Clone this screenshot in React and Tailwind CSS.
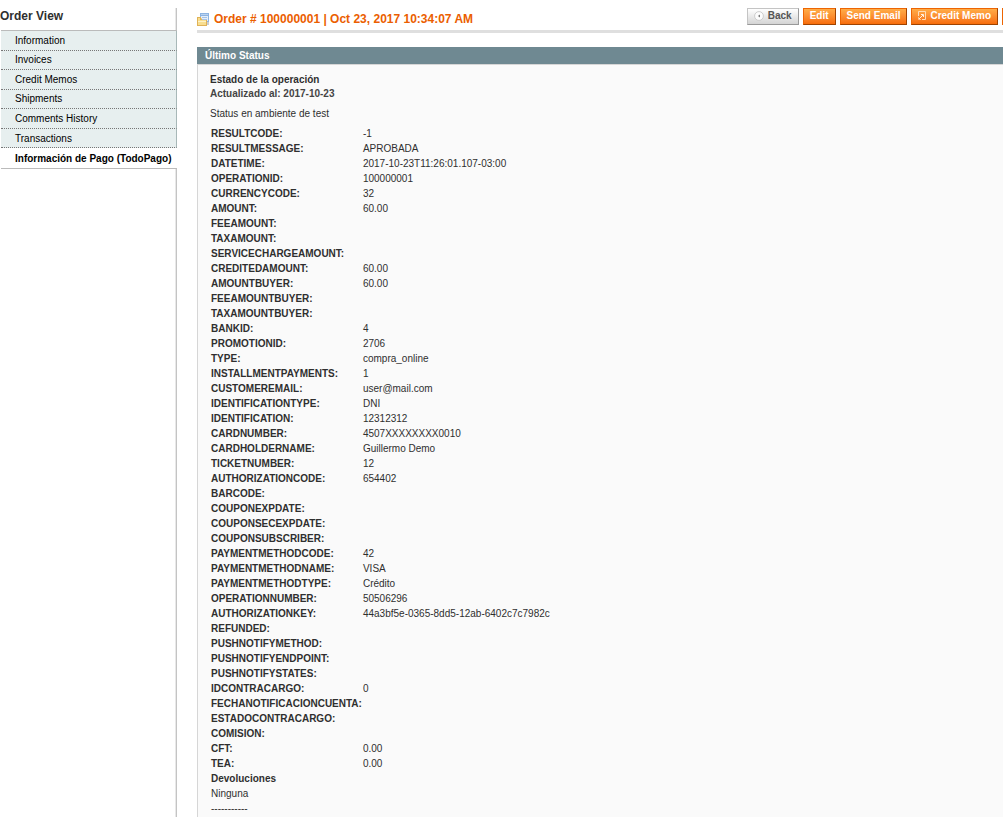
import React from "react";

const tabs = ["Information", "Invoices", "Credit Memos", "Shipments", "Comments History", "Transactions"];

const rows = [
  ["RESULTCODE", "-1"],
  ["RESULTMESSAGE", "APROBADA"],
  ["DATETIME", "2017-10-23T11:26:01.107-03:00"],
  ["OPERATIONID", "100000001"],
  ["CURRENCYCODE", "32"],
  ["AMOUNT", "60.00"],
  ["FEEAMOUNT", ""],
  ["TAXAMOUNT", ""],
  ["SERVICECHARGEAMOUNT", ""],
  ["CREDITEDAMOUNT", "60.00"],
  ["AMOUNTBUYER", "60.00"],
  ["FEEAMOUNTBUYER", ""],
  ["TAXAMOUNTBUYER", ""],
  ["BANKID", "4"],
  ["PROMOTIONID", "2706"],
  ["TYPE", "compra_online"],
  ["INSTALLMENTPAYMENTS", "1"],
  ["CUSTOMEREMAIL", "user@mail.com"],
  ["IDENTIFICATIONTYPE", "DNI"],
  ["IDENTIFICATION", "12312312"],
  ["CARDNUMBER", "4507XXXXXXXX0010"],
  ["CARDHOLDERNAME", "Guillermo Demo"],
  ["TICKETNUMBER", "12"],
  ["AUTHORIZATIONCODE", "654402"],
  ["BARCODE", ""],
  ["COUPONEXPDATE", ""],
  ["COUPONSECEXPDATE", ""],
  ["COUPONSUBSCRIBER", ""],
  ["PAYMENTMETHODCODE", "42"],
  ["PAYMENTMETHODNAME", "VISA"],
  ["PAYMENTMETHODTYPE", "Crédito"],
  ["OPERATIONNUMBER", "50506296"],
  ["AUTHORIZATIONKEY", "44a3bf5e-0365-8dd5-12ab-6402c7c7982c"],
  ["REFUNDED", ""],
  ["PUSHNOTIFYMETHOD", ""],
  ["PUSHNOTIFYENDPOINT", ""],
  ["PUSHNOTIFYSTATES", ""],
  ["IDCONTRACARGO", "0"],
  ["FECHANOTIFICACIONCUENTA", ""],
  ["ESTADOCONTRACARGO", ""],
  ["COMISION", ""],
  ["CFT", "0.00"],
  ["TEA", "0.00"],
];

function OrderIcon() {
  return (
    <svg width="12" height="13" viewBox="0 0 12 13" aria-hidden="true" className="shrink-0">
      <rect x="3" y="0" width="9" height="9" fill="#8db4e2" />
      <rect x="4" y="1" width="7" height="1" fill="#b9d2ef" />
      <rect x="4" y="3" width="7" height="5" fill="#e4eefa" />
      <path d="M5 4.5h5M5 6.5h5" stroke="#a5c3e8" />
      <path d="M10 12V9h2v3z" fill="#c9cdd4" />
      <path d="M0 4h4v1.5h1V7h5v6H0z" fill="#e0b257" />
      <path d="M1 5h2v2h6v5H1z" fill="#f8de90" />
      <path d="M1 8.5h8" stroke="#fdf2c8" />
    </svg>
  );
}

function BackIcon() {
  return (
    <svg width="10" height="10" viewBox="0 0 10 10" aria-hidden="true">
      <circle cx="5" cy="5" r="4.4" fill="#fcfcfc" stroke="#c8c8c8" strokeWidth="0.9" />
      <path d="M6 3.4v3.2L3.9 5z" fill="#777" />
    </svg>
  );
}

function MemoIcon() {
  return (
    <svg width="8" height="9" viewBox="0 0 8 9" aria-hidden="true">
      <path d="M0.5 5V0.5h7v8H4" fill="none" stroke="#ffdcb8" />
      <path d="M3 3.5h2.5V6M5 4L1 8" fill="none" stroke="#fff1e2" />
      <path d="M0.5 6v2.5H3" fill="none" stroke="#ffc18a" />
    </svg>
  );
}

function Button({ children, gray }) {
  return (
    <button
      type="button"
      className={
        "flex h-[17px] shrink-0 items-center gap-1 whitespace-nowrap border px-1.5 pb-0.5 font-bold leading-[13px] " +
        (gray
          ? "border-t-[#c4c4c4] border-l-[#c4c4c4] border-r-[#999] border-b-[#999] bg-linear-to-b from-white to-[#d4d4d4] text-[#555]"
          : "border-t-[#ed6502] border-l-[#ed6502] border-r-[#a04300] border-b-[#a04300] bg-linear-to-b from-[#ffac47] to-[#f76d09] text-white")
      }
    >
      {children}
    </button>
  );
}

export default function App() {
  return (
    <div className="flex min-h-screen gap-5 overflow-hidden bg-white pt-2 font-['Liberation_Sans',Arial,sans-serif] text-[10px] leading-[15px] text-[#2f2f2f]">
      <aside className="w-[177px] shrink-0 border-r border-[#c4c4c4] bg-linear-to-l from-[#e8e8e8] from-[1px] to-white to-[1px]">
        <h3 className="h-[22px] text-[12px] font-bold leading-4">Order View</h3>
        <ul className="-mr-px ml-px grid h-[139px] auto-rows-fr border-y border-[#bbb] text-black">
          {tabs.map((t) => (
            <li key={t} className="flex border-r border-b border-r-[#a8b8b8] border-b-[#777] bg-[#e7efef] [border-bottom-style:dotted]">
              <a href="#" className="flex w-full items-center pl-3.5 leading-[13px]">{t}</a>
            </li>
          ))}
          <li className="flex bg-white">
            <a href="#" className="flex w-full items-center whitespace-nowrap pl-3.5 font-bold leading-[13px]">Información de Pago (TodoPago)</a>
          </li>
        </ul>
      </aside>

      <main className="flex min-w-0 flex-1 flex-col">
        <header className="flex h-[25px] items-start justify-between border-b-[3px] border-[#dfdfdf]">
          <div className="flex items-center gap-[5px] pt-[3px]">
            <OrderIcon />
            <h1 className="whitespace-nowrap text-[12px] font-bold leading-4 text-[#eb5e00]">Order # 100000001 | Oct 23, 2017 10:34:07 AM</h1>
          </div>
          <div className="flex gap-1">
            <Button gray>
              <BackIcon />
              Back
            </Button>
            <Button>Edit</Button>
            <Button>Send Email</Button>
            <Button>
              <MemoIcon />
              Credit Memo
            </Button>
            <div className="h-[17px] w-px bg-[#ed6502]" />
          </div>
        </header>

        <section className="mt-3.5 flex flex-1 flex-col">
          <h2 className="bg-[#6f8992] px-2 pt-px font-bold leading-4 text-white">Último Status</h2>
          <div className="flex-1 border-t border-l border-[#d6d6d6] bg-[#fafafa] pt-2 pl-3">
            <h3 className="font-bold leading-[14px]">Estado de la operación</h3>
            <p className="font-bold leading-[14px] text-[#444]">Actualizado al: 2017-10-23</p>
            <p className="mt-1.5 leading-[14px]">Status en ambiente de test</p>
            <table className="ml-px mt-[5px] border-collapse">
              <tbody>
                {rows.map(([label, value]) => (
                  <tr key={label} className="h-[15px]">
                    <th scope="row" className="p-0 pr-px text-left font-bold">{label}:</th>
                    <td className="p-0">{value}</td>
                  </tr>
                ))}
              </tbody>
            </table>
            <div className="pl-px">
              <h4 className="font-bold">Devoluciones</h4>
              <p>Ninguna</p>
              <p>-----------</p>
            </div>
          </div>
        </section>
      </main>
    </div>
  );
}
